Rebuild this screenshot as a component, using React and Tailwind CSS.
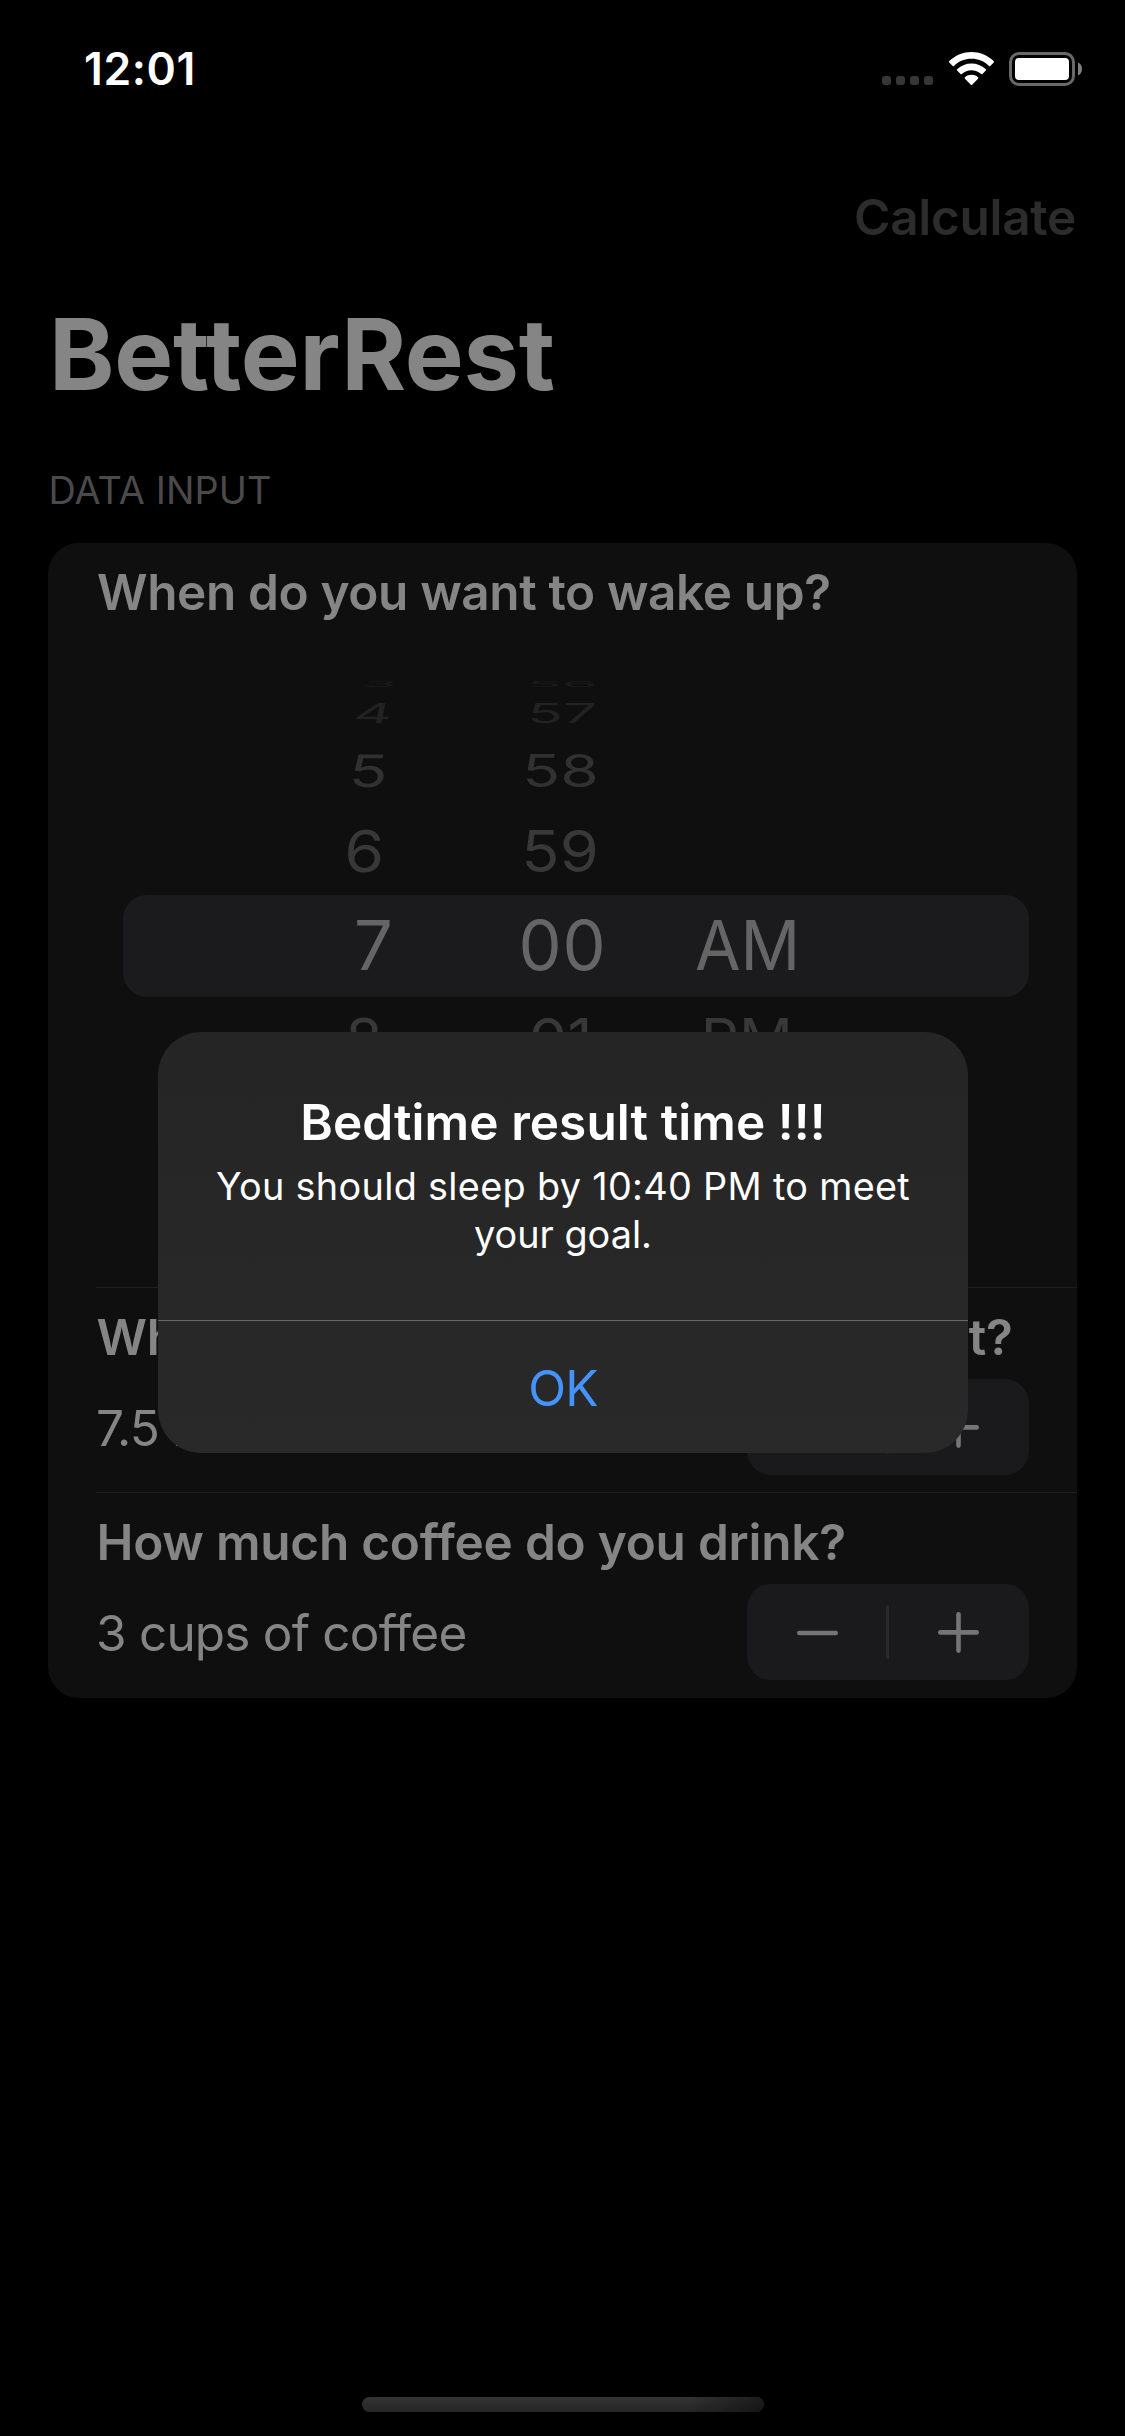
import React from "react";

const wheelRows = [
  {
    height: "h-[16px]",
    cells: [
      { text: "3", look: "text-[#1a1a1a] [transform:translateX(6.5px)_skewX(-35deg)_scale(0.8,0.12)]" },
      { text: "56", look: "text-[#1a1a1a] [transform:scale(0.85,0.12)]" },
    ],
  },
  {
    height: "h-[42px]",
    cells: [
      { text: "4", look: "text-[#222222] [transform:skewX(-10deg)_scale(0.87,0.4)]" },
      { text: "57", look: "text-[#222222] [transform:translateX(-0.5px)_skewX(-3deg)_scale(0.86,0.4)]" },
    ],
  },
  {
    height: "h-[74px]",
    cells: [
      { text: "5", look: "text-[#313131] [transform:translateX(-5.5px)_skewX(-4deg)_scale(0.93,0.65)]" },
      { text: "58", look: "text-[#313131] [transform:translateX(-1.5px)_scale(0.91,0.65)]" },
    ],
  },
  {
    height: "h-[87px]",
    cells: [
      { text: "6", look: "text-[#383838] [transform:translate(-9px,0.7px)_skewX(-1deg)_scale(0.94,0.84)]" },
      { text: "59", look: "text-[#383838] [transform:translate(-2px,0.7px)_scale(0.92,0.84)]" },
    ],
  },
  {
    height: "h-[102px]",
    selected: true,
    cells: [
      { text: "7", look: "text-[#656565]" },
      { text: "00", look: "text-[#656565] tracking-[0.8px] [transform:translateX(0.5px)]" },
      { text: "AM", look: "text-[#656565] [transform:translateX(1px)_scaleX(0.965)]" },
    ],
  },
  {
    height: "h-[87px]",
    cells: [
      { text: "8", look: "text-[#383838] [transform:translateX(-9px)_skewX(1deg)_scale(0.88,0.84)]" },
      { text: "01", look: "text-[#383838] [transform:translateX(-1px)_scale(0.9,0.84)]" },
      { text: "PM", look: "text-[#383838] [transform:scale(0.87,0.84)]" },
    ],
  },
];

function WifiIcon() {
  return (
    <svg className="h-[33px] w-[45px]" viewBox="0 0 15.28 10.97" fill="#fff" preserveAspectRatio="none">
      <path d="M7.637 2.277C9.853 2.277 11.984 3.129 13.59 4.656C13.71 4.774 13.904 4.772 14.023 4.652L15.179 3.487C15.239 3.426 15.273 3.344 15.272 3.258C15.272 3.173 15.237 3.091 15.176 3.031C10.961 -1.01 4.311 -1.01 0.096 3.031C0.035 3.091 0.001 3.172 0 3.258C0 3.344 0.033 3.426 0.094 3.487L1.25 4.652C1.369 4.772 1.562 4.774 1.683 4.656C3.289 3.129 5.42 2.277 7.637 2.277Z" />
      <path d="M7.637 6.07C8.854 6.07 10.028 6.522 10.931 7.34C11.053 7.456 11.245 7.453 11.364 7.334L12.518 6.168C12.579 6.107 12.613 6.024 12.612 5.938C12.611 5.852 12.576 5.769 12.514 5.71C9.766 3.153 5.51 3.153 2.762 5.71C2.7 5.769 2.664 5.852 2.664 5.938C2.663 6.024 2.696 6.107 2.757 6.168L3.911 7.334C4.03 7.453 4.223 7.456 4.345 7.34C5.247 6.523 6.42 6.07 7.637 6.07Z" />
      <path d="M9.95 8.622C9.951 8.708 9.918 8.791 9.857 8.852L7.86 10.866C7.801 10.925 7.72 10.959 7.637 10.959C7.553 10.959 7.472 10.925 7.414 10.866L5.416 8.852C5.355 8.791 5.322 8.708 5.324 8.622C5.326 8.535 5.363 8.453 5.426 8.395C6.702 7.316 8.571 7.316 9.847 8.395C9.911 8.453 9.948 8.535 9.95 8.622Z" />
    </svg>
  );
}

function BatteryIcon() {
  return (
    <svg className="h-[34px] w-[74px]" viewBox="0 0 74 34" fill="none">
      <rect x="1.5" y="1.5" width="63" height="31" rx="8.5" stroke="#696969" strokeWidth="3" />
      <rect x="6" y="6" width="54" height="22" rx="4" fill="#fff" />
      <path d="M69 10.5C71.600 11.600 73 14 73 17C73 20 71.600 22.400 69 23.500Z" fill="#808080" />
    </svg>
  );
}

function StatusBar() {
  return (
    <div className="flex h-[132px] items-start justify-between pl-[84px] pr-[42px]">
      <span className="mt-[47px] text-[44.5px] font-semibold leading-[44px] tracking-[0.6px] text-white">12:01</span>
      <div className="mt-[52px] flex items-start">
        <div className="mt-6 flex gap-[5px]">
          <i className="size-[9px] rounded-[3px] bg-[#363636]" />
          <i className="size-[9px] rounded-[3px] bg-[#363636]" />
          <i className="size-[9px] rounded-[3px] bg-[#363636]" />
          <i className="size-[9px] rounded-[3px] bg-[#363636]" />
        </div>
        <div className="ml-[16px]">
          <WifiIcon />
        </div>
        <div className="ml-[15px]">
          <BatteryIcon />
        </div>
      </div>
    </div>
  );
}

function WheelPicker() {
  return (
    <div className="flex h-[646px] flex-col pl-[75px] pr-12 pt-[35px]">
      {wheelRows.map((row) => (
        <div
          key={row.cells[0].text}
          className={`grid shrink-0 grid-cols-[181px_196px_174px] items-center justify-items-center pl-[160px] text-[68.5px] leading-none ${row.height} ${
            row.selected ? "rounded-[24px] bg-[#1b1b1d]" : ""
          }`}
        >
          {row.cells.map((cell) => (
            <span key={cell.text} className={`-my-8 ${cell.look}`}>
              {cell.text}
            </span>
          ))}
        </div>
      ))}
    </div>
  );
}

function Stepper() {
  return (
    <div className="flex h-[96px] w-[282px] items-center rounded-[24px] bg-[#1a1a1c]">
      <button className="flex w-[139px] justify-center pl-[2px]" aria-label="Decrease">
        <svg className="h-[42px] w-[42px]" viewBox="0 0 42 42" stroke="#757575" strokeWidth="4.4" strokeLinecap="round">
          <path d="M2.200 22H38.800" />
        </svg>
      </button>
      <div className="h-[54px] w-[3px] rounded-full bg-[#29292b]" />
      <button className="flex w-[140px] justify-center pr-px" aria-label="Increase">
        <svg className="h-[42px] w-[42px]" viewBox="0 0 42 42" stroke="#757575" strokeWidth="4.6" strokeLinecap="round">
          <path d="M2.300 21.400H38.700M20.500 3.200V39.600" />
        </svg>
      </button>
    </div>
  );
}

function StepperRow({ title, value }) {
  return (
    <div className="ml-12 border-t border-[#1f1f20] pr-12">
      <h2 className="h-[91px] whitespace-nowrap pl-[0.5px] text-[49.5px] font-semibold leading-[98px] tracking-[-0.23px]">
        {title}
      </h2>
      <div className="flex items-center justify-between">
        <span className="mt-[2px] text-[49.5px] leading-[60px] tracking-[-0.8px]">{value}</span>
        <Stepper />
      </div>
    </div>
  );
}

function ResultAlert() {
  return (
    <div className="absolute left-[158px] top-[1032px] flex h-[421px] w-[810px] flex-col overflow-hidden rounded-[43px] bg-linear-to-b from-[#252525] to-[#292929] text-center text-white">
      <div className="h-[288px] pt-[60px]">
        <h3 className="text-[49.5px] font-semibold leading-[60px] tracking-[0.08px]">Bedtime result time !!!</h3>
        <p className="mt-[10px] whitespace-nowrap text-[37.8px] leading-[48px]">
          <span className="tracking-[0.32px]">You should sleep by 10:40 PM to meet</span>
          <br />
          your goal.
        </p>
      </div>
      <button className="flex h-[133px] items-center justify-center border-t border-[#686868] pt-[2px] text-[49.5px] tracking-[-0.8px] text-[#4593ff]">
        OK
      </button>
    </div>
  );
}

export default function App() {
  return (
    <div className="relative flex h-[2436px] w-[1125px] flex-col overflow-hidden bg-black font-['Inter',sans-serif] text-[#858585]">
      <StatusBar />
      <div className="flex h-[170px] items-center justify-end pr-[49px]">
        <button className="text-[49.5px] font-semibold leading-[60px] tracking-[-0.3px] text-[#2c2c2c]">Calculate</button>
      </div>
      <h1 className="h-[104px] pl-[49px] text-[99px] font-bold leading-[104px] tracking-[-0.2px]">BetterRest</h1>
      <div className="pl-[48.5px] pt-[38px] text-[37.8px] leading-[92px] tracking-[0.1px] text-[#4a4a4c]">DATA INPUT</div>
      <section className="mx-12 mt-[7px] h-[1155px] rounded-[31px] bg-[#0f0f0f]">
        <h2 className="h-[98px] pl-[49px] text-[49.5px] font-semibold leading-[98px] tracking-[-0.36px]">
          When do you want to wake up?
        </h2>
        <WheelPicker />
        <div className="flex flex-col gap-[17px]">
          <StepperRow title="What is the amount of sleep you want?" value="7.5 hours" />
          <StepperRow title="How much coffee do you drink?" value="3 cups of coffee" />
        </div>
      </section>
      <div className="mx-auto mb-6 mt-auto h-[15px] w-[402px] rounded-full bg-linear-to-b from-[#343434] to-[#272727]">
        <div className="ml-auto h-full w-[80px] rounded-r-full bg-linear-to-r from-transparent to-black/45" />
      </div>
      <ResultAlert />
    </div>
  );
}
